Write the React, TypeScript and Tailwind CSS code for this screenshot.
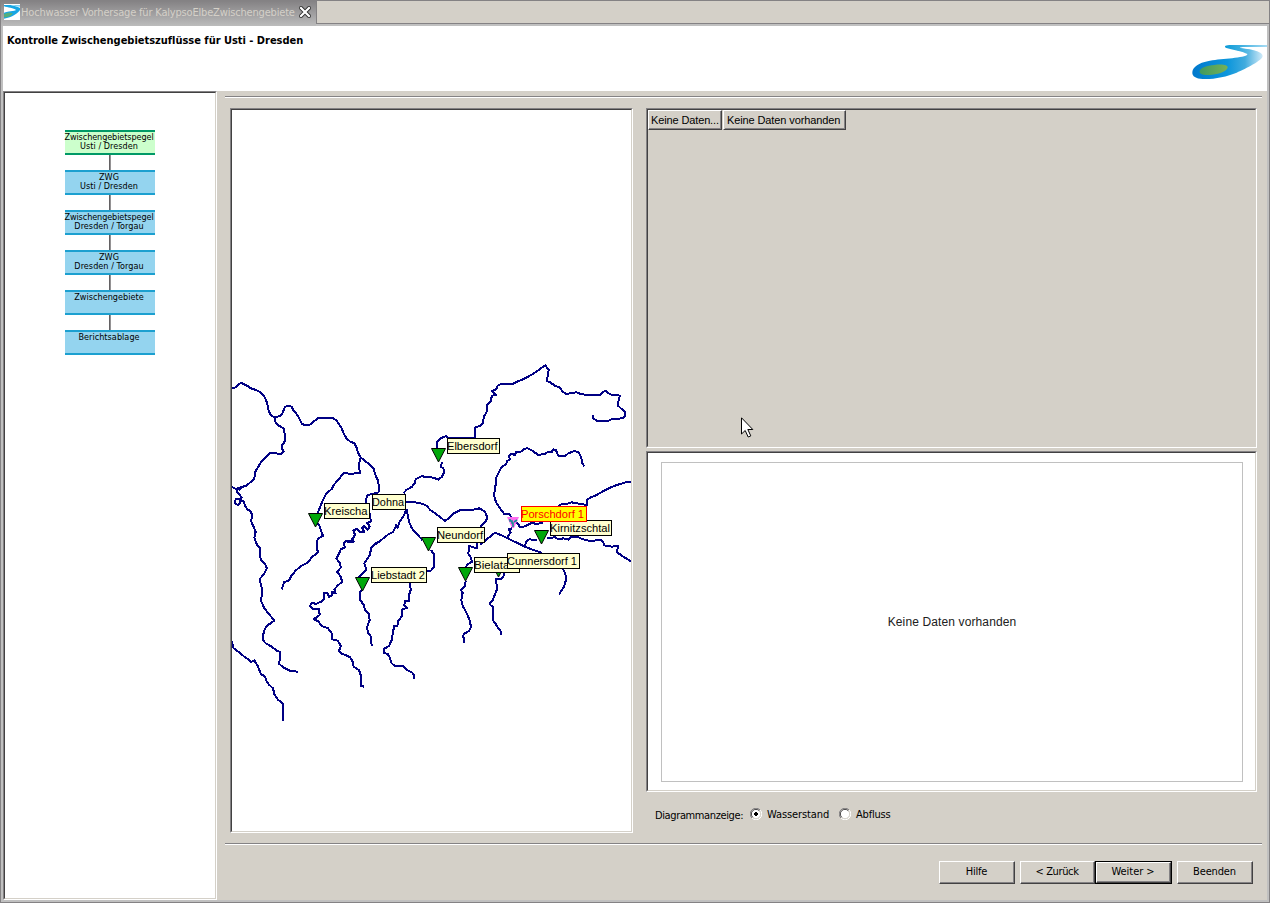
import React from "react";

const UI = "font-['DejaVu_Sans_Condensed','DejaVu_Sans',sans-serif] [font-stretch:condensed]";
const ARIAL = "font-['Liberation_Sans',Arial,sans-serif]";

type Box = { lines: string[]; active?: boolean };

const boxes: Box[] = [
  { lines: ["Zwischengebietspegel", "Usti / Dresden"], active: true },
  { lines: ["ZWG", "Usti / Dresden"] },
  { lines: ["Zwischengebietspegel", "Dresden / Torgau"] },
  { lines: ["ZWG", "Dresden / Torgau"] },
  { lines: ["Zwischengebiete"] },
  { lines: ["Berichtsablage"] },
];

// River courses, grouped by map sheet; each sheet has its own origin and 1/3 px units.
const sheets: { x: number; y: number; rivers: string[] }[] = [
  {
    x: 225,
    y: 355,
    rivers: [
      "20,100 30,98 38,90 48,84 56,87 66,92 78,100 90,104 100,108 110,116 118,124 124,138 128,152 130,164 135,176 142,183 148,187 160,184 170,180 174,170 180,156 188,152 200,155 205,166 212,174 220,184 225,196 232,208 245,210 258,208 268,198 280,189 300,188 325,190 334,196 342,207 350,220 356,236 366,252 376,260 388,265 394,276 400,295 408,308 420,318 434,328 446,342 452,362 460,378 462,412",
      "148,187 152,204 162,212 176,220 180,240 180,258 172,270 170,280 176,290 168,297 150,295 135,294 120,308 108,322 98,338 90,352 88,370 76,382 64,392 50,396 34,402 20,396",
      "50,396 44,404 38,402 36,412 44,420 50,428 44,434 32,432 30,444 38,450 46,444 46,434 56,440 60,452 68,464 76,468 82,480 78,498 86,516 92,530 88,548 90,556",
      "408,308 404,316 402,334 405,354 380,356 355,355 342,372 328,388 320,402 304,416 296,430 288,450 280,470 276,490",
      "278,505 284,514 288,528 294,542 278,552 276,568",
      "462,412 445,416 428,420 422,435 422,460 434,476 436,488 438,500 426,503 434,514 428,524 418,513 411,518 418,530 405,532 395,522 385,526 390,540 382,552 386,560 374,562 360,557",
      "540,440 570,442 590,446 605,452 615,464 640,482 660,498 673,488 685,476 705,466 745,464 763,460 780,470 787,488 780,502 765,516",
      "535,415 545,404 560,396 570,384 572,372 590,364 600,365 615,366 630,370 640,374 651,365 657,352 655,340 647,335 651,322",
      "545,462 548,480 552,500 560,518 570,532 580,542 592,555",
      "545,462 535,485 524,500 518,518 514,510 505,530 490,538 475,550 460,562 450,568",
    ],
  },
  {
    x: 430,
    y: 355,
    rivers: [
      "20,285 20,262 32,250 48,243 58,250 80,248 134,248 134,218 150,212 158,205 162,185 170,170 172,150 182,138 186,122 198,120 185,108 200,102 203,92 212,88 225,88 245,88 262,80 285,70 310,56 330,42 346,31 356,44 354,60 350,78 360,82 375,92 390,98 396,108 408,117 425,114 440,112 455,118 480,120 510,120 520,110 528,108 540,118 555,120 570,122 566,135 564,152 575,162 586,172 586,184 578,190 545,192 535,198 500,197 490,190 488,180",
      "250,495 238,478 222,476 210,460 200,445 194,430 192,418 196,400 198,370 205,355 214,337 228,328 232,318 240,312 236,304 242,296 255,300 258,292 270,292 280,284 292,279 308,288 325,300 345,296 355,290 365,291 370,283 378,286 385,302 405,303 415,295 430,289 445,290 450,300 456,315 457,325 463,334",
      "603,382 590,381 575,386 560,390 540,398 520,408 500,420 480,428 470,436 472,450 460,448 440,445 425,442 408,448 395,447 385,453",
      "340,503 315,508 312,502 300,506 285,514 270,516 262,504 255,497",
    ],
  },
  {
    x: 430,
    y: 500,
    rivers: [
      "246,85 236,88 242,98 234,108 235,116",
      "150,134 165,122 180,110 195,98 210,104 235,116 260,128 285,140 310,150 335,158",
      "285,140 288,125 298,118 320,120",
      "350,114 375,112 385,118 400,115 415,119 425,110 440,110 460,118 485,124 500,120 512,120 520,128 522,136 545,140 565,138 560,156 580,170 603,184",
      "142,124 140,145 118,138 118,150 114,160 122,172 126,185 110,195 108,205",
      "107,243 104,260 92,270 98,278 94,300 98,318 108,335 118,358 123,380 118,392 102,402 98,412 102,414 102,428",
      "225,215 220,230 212,238 198,238 200,255 200,270 192,290 188,302 178,312 190,322 188,340 188,360 196,370 205,385 213,395 213,404",
      "398,205 406,220 408,240 402,260 392,275 388,284",
    ],
  },
  {
    x: 225,
    y: 540,
    rivers: [
      "90,0 98,18 104,22 104,40 108,60 120,72 126,85 118,100 106,115 106,128 112,150 108,182 118,205 132,222 148,242 125,258 116,275 114,300 122,310 140,320 155,332 165,336 163,372 175,382 195,392 210,394 220,396",
      "20,303 26,325 40,335 58,350 70,358 78,366 88,361 98,378 108,402 120,410 124,422 132,434 144,445 148,462 158,478 174,492 174,542",
      "276,10 278,38 262,50 248,68 228,78 212,92 200,106 192,122 178,126 170,148",
      "382,4 364,2 356,10 360,22 347,28 342,42 334,55 344,68 348,82 336,96 346,108 352,125 340,135 328,148 332,160 322,156 320,166 312,170 306,158 296,160 298,175 288,185 272,192 262,188 254,198 264,206 282,206 284,225 266,238 280,244 290,258 308,264 320,280 322,298 338,302 348,318 342,332 350,342 362,345 375,352 382,362 386,380 402,390 408,408 408,438 418,440",
      "470,0 452,10 438,25 435,45 418,70 424,90 410,102 398,114",
      "412,150 404,158 406,180 416,195 420,210 432,222 434,240 426,262 430,280 438,290 440,318",
      "618,30 628,45 628,80 618,92 600,92",
      "555,120 557,150 552,165 553,182 540,182 538,195 546,204 532,208 530,230 520,242 517,258 508,258 504,275 500,300 492,318 478,326 476,338 488,342 494,352 500,370 510,378 535,378 545,390 562,398 568,406 568,416",
    ],
  },
];

const markers: [number, number][] = [
  [438.5, 448],
  [315.5, 513],
  [428.5, 537],
  [362.5, 577],
  [465.5, 567],
  [541.5, 530],
  [498.5, 563],
];

type MapLabel = { text: string; x: number; y: number; w: number; tw: number; hot?: boolean };

const labels: MapLabel[] = [
  { text: "Kreischa", x: 324, y: 503, w: 46, tw: 43.5 },
  { text: "Dohna", x: 372, y: 494, w: 34, tw: 32 },
  { text: "Elbersdorf", x: 447, y: 438, w: 53, tw: 50.5 },
  { text: "Kirnitzschtal", x: 550, y: 520, w: 62, tw: 60 },
  { text: "Porschdorf 1", x: 521, y: 506, w: 66, tw: 63, hot: true },
  { text: "Neundorf", x: 437, y: 527, w: 48, tw: 46 },
  { text: "Bielatal", x: 474, y: 557, w: 46, tw: 38 },
  { text: "Cunnersdorf 1", x: 507, y: 553, w: 73, tw: 70 },
  { text: "Liebstadt 2", x: 371, y: 567, w: 56, tw: 54 },
];

function Sunken({ className = "", children }: { className?: string; children?: React.ReactNode }) {
  return (
    <div className={`border border-t-[#848284] border-l-[#848284] border-r-white border-b-white ${className}`}>
      <div className="h-full w-full border border-t-[#424142] border-l-[#424142] border-r-[#d4d0c8] border-b-[#d4d0c8]">
        {children}
      </div>
    </div>
  );
}

function Rule() {
  return <div className="h-[2px] shrink-0 border-t border-[#848284] bg-white" />;
}

function PushButton({ className = "", primary, children }: { className?: string; primary?: boolean; children: React.ReactNode }) {
  return (
    <button
      className={`block h-[23px] shrink-0 text-[11px] text-black ${UI} ${primary ? "border border-black" : ""} ${className}`}
    >
      <span className="block h-full w-full border border-t-white border-l-white border-r-[#424142] border-b-[#424142]">
        <span className="flex h-full w-full items-center justify-center border-r border-b border-[#848284] pt-px whitespace-pre">
          {children}
        </span>
      </span>
    </button>
  );
}

function HeaderCell({ className = "", children }: { className?: string; children: React.ReactNode }) {
  return (
    <div className={`h-[20px] border border-t-white border-l-white border-r-[#424142] border-b-[#424142] ${className}`}>
      <div
        className={`flex h-full items-center border-r border-b border-[#848284] pt-[2px] pl-[2px] text-[11px] whitespace-nowrap ${ARIAL}`}
      >
        {children}
      </div>
    </div>
  );
}

function Radio({ checked }: { checked?: boolean }) {
  return (
    <svg width="12" height="12" viewBox="0 0 12 12" className="shrink-0">
      <circle cx="6" cy="6" r="5" fill="#fff" />
      <path d="M10.1 1.9A5.5 5.5 0 0 1 1.9 10.1" fill="none" stroke="#fff" />
      <path d="M9.3 2.7A4.6 4.6 0 0 1 2.7 9.3" fill="none" stroke="#d4d0c8" />
      <path d="M1.9 10.1A5.5 5.5 0 0 1 10.1 1.9" fill="none" stroke="#848284" />
      <path d="M2.7 9.3A4.6 4.6 0 0 1 9.3 2.7" fill="none" stroke="#424142" />
      {checked && <path d="M5 4h2v1h1v2h-1v1h-2v-1h-1v-2h1z" fill="#000" shapeRendering="crispEdges" />}
    </svg>
  );
}

function RiverLogo() {
  return (
    <svg width="75" height="36" viewBox="128 132 225 108">
      <defs>
        <linearGradient id="water" x1="0" x2="1">
          <stop offset="0" stopColor="#0078cc" />
          <stop offset=".5" stopColor="#0c96dc" />
          <stop offset=".75" stopColor="#42acde" />
          <stop offset="1" stopColor="#d0eaf8" />
        </linearGradient>
        <linearGradient id="tip" x1="0" x2="1">
          <stop offset="0" stopColor="#0a9ad8" />
          <stop offset=".4" stopColor="#40b0e0" />
          <stop offset="1" stopColor="#a8dcf4" />
        </linearGradient>
        <linearGradient id="isle" x1="0" x2="1">
          <stop offset="0" stopColor="#3f9a60" />
          <stop offset="1" stopColor="#76b056" />
        </linearGradient>
      </defs>
      <path
        d="M270 144C300 147 340 153 340 168C341 180 290 206 262 218C232 230 190 239 160 237C140 236 128 230 129 216C131 200 150 189 175 184C210 175 275 176 293 165C300 157 275 153 258 149Z"
        fill="url(#water)"
      />
      <path d="M353 135H240C225 136 224 141 231 144C245 148 265 152 280 156L292 161L310 150C295 147 278 147 271 143L280 141H353Z" fill="url(#tip)" />
      <path d="M151 213C154 203 172 197 195 195C220 192 236 195 235 203C233 212 214 221 188 224C166 227 149 224 151 213Z" fill="url(#isle)" />
    </svg>
  );
}

function TabIcon() {
  return (
    <svg width="16" height="16" viewBox="0 0 48 48" className="shrink-0 bg-white">
      <path d="M0 3L20 3L40 8L48 12V18C42 28 25 40 0 44V26C12 21 30 22 36 18C30 13 10 10 0 7Z" fill="#18a6e4" />
      <path d="M0 8C12 12 30 14 32 18C26 21 10 20 0 25Z" fill="#fff" />
      <path d="M0 31C8 26 22 25 26 29C22 36 10 40 0 40Z" fill="#55ae7c" />
      <path d="M20 3H48V8L38 7Z" fill="#7cd0f2" />
    </svg>
  );
}

function RiverMap() {
  return (
    <svg width="399" height="721" viewBox="232 110 399 721" className="block">
      {sheets.map((s, i) => (
        <g
          key={i}
          transform={`translate(${s.x} ${s.y}) scale(0.33333)`}
          fill="none"
          stroke="#000084"
          strokeWidth="6"
          strokeLinejoin="round"
          shapeRendering="crispEdges"
        >
          {s.rivers.map((r, j) => (
            <polyline key={j} points={r} />
          ))}
        </g>
      ))}
      {markers.map(([x, y], i) => (
        <path key={i} d={`M${x - 7} ${y + 0.5}h14l-7 13.5z`} fill="#00a80a" stroke="#000" strokeWidth="1" />
      ))}
      <path d="M507 517h12l-5 11h-2z" fill="#ff6cf0" />
      <path d="M510 519v2h2v2h1v4M517 520l-3 2" fill="none" stroke="#109090" strokeWidth="1.6" />
      {labels.map((l) => (
        <g key={l.text}>
          <rect
            x={l.x + 0.5}
            y={l.y + 0.5}
            width={l.w - 1}
            height="15"
            fill={l.hot ? "#ffff00" : "#ffffce"}
            stroke={l.hot ? "#ff0000" : "#000"}
          />
          <text
            x={l.x}
            y={l.y + 12}
            textLength={l.tw}
            lengthAdjust="spacingAndGlyphs"
            className={`text-[11px] ${ARIAL}`}
            fill={l.hot ? "#ff0000" : "#000"}
          >
            {l.text}
          </text>
        </g>
      ))}
    </svg>
  );
}

export default function App() {
  return (
    <div className={`relative flex h-[903px] w-[1270px] flex-col overflow-hidden border border-[#848284] bg-[#c0c0c0] text-black ${UI}`}>
      <div className="flex h-[25px] shrink-0">
        <div className="flex w-[315px] items-start bg-linear-to-b from-[#848284] to-[#bcbcbc] pt-[3px] pl-[3px]">
          <TabIcon />
          <span className="w-[279px] pt-[2px] pl-px text-[11px] leading-[14px] tracking-[-0.18px] whitespace-nowrap text-[#d4d0c8]">
            Hochwasser Vorhersage für KalypsoElbeZwischengebiete
          </span>
          <svg width="12" height="12" viewBox="0 0 12 12" className="mt-[2px] shrink-0">
            <path d="M2 2l8 8M10 2l-8 8" stroke="#303030" strokeWidth="4" strokeLinecap="square" />
            <path d="M2 2l8 8M10 2l-8 8" stroke="#fff" strokeWidth="2.200" strokeLinecap="square" />
          </svg>
        </div>
        <div className="h-[23px] flex-1 border-b border-l border-[#848284] bg-[#d4d0c8]" />
      </div>

      <div className="mr-[2px] mb-[2px] ml-[2px] flex min-h-0 flex-1 flex-col bg-[#d4d0c8]">
        <header className="flex h-[65px] shrink-0 justify-between bg-white pl-[4px]">
          <h1 className="pt-[8px] text-[11px] leading-[14px] font-bold tracking-[-0.02px] whitespace-nowrap">
            Kontrolle Zwischengebietszuflüsse für Usti - Dresden
          </h1>
          <div className="mt-[18px]">
            <RiverLogo />
          </div>
        </header>

        <div className="flex min-h-0 flex-1">
          <Sunken className="w-[214px] shrink-0 bg-white">
            <div className="flex flex-col items-center pt-[37px]">
              {boxes.map((b, i) => (
                <React.Fragment key={i}>
                  {i > 0 && <div className="h-[15px] w-[2px] border-l border-[#636163] bg-[#949294]" />}
                  <div
                    className={`flex h-[25px] w-[90px] flex-col items-center border-y-2 pt-px pr-[2px] text-[9px] leading-[9px] whitespace-nowrap ${
                      b.active ? "border-[#009966] bg-[#ccffcc]" : "border-[#1ca0d0] bg-[#94d4ef]"
                    }`}
                  >
                    {b.lines.map((t) => (
                      <span key={t} className={t.length > 18 ? "tracking-[-0.08px]" : "tracking-[0.05px]"}>
                        {t}
                      </span>
                    ))}
                  </div>
                </React.Fragment>
              ))}
            </div>
          </Sunken>

          <div className="flex min-w-0 flex-1 flex-col pt-[5px] pr-[5px] pl-[8px]">
            <Rule />
            <div className="flex h-[735px] shrink-0 pt-[10px] pl-[5px]">
              <Sunken className="h-[725px] w-[403px] shrink-0 bg-white">
                <RiverMap />
              </Sunken>
              <div className="ml-[13px] flex w-[611px] flex-col">
                <Sunken className="h-[340px] shrink-0">
                  <div className="flex gap-px">
                    <HeaderCell className="w-[74px] tracking-[-0.13px]">Keine Daten...</HeaderCell>
                    <HeaderCell className="w-[123px] pl-px tracking-[-0.11px]">Keine Daten vorhanden</HeaderCell>
                  </div>
                </Sunken>
                <Sunken className="mt-[3px] h-[341px] shrink-0 bg-white">
                  <div className={`mt-[9px] ml-[13px] flex h-[320px] w-[582px] items-center justify-center border border-[#c0c0c0] text-[12px] ${ARIAL}`}>
                    <span className="tracking-[0.12px] text-[#202020]">Keine Daten vorhanden</span>
                  </div>
                </Sunken>
                <div className="flex pt-[16px] pl-[9px] text-[11px] leading-[14px] whitespace-nowrap">
                  <span className="w-[95px] pt-px tracking-[-0.38px]">Diagrammanzeige:</span>
                  <label className="flex w-[89px] gap-[5px]">
                    <Radio checked />
                    <span className="tracking-[-0.1px]">Wasserstand</span>
                  </label>
                  <label className="flex gap-[5px]">
                    <Radio />
                    <span className="tracking-[-0.2px]">Abfluss</span>
                  </label>
                </div>
              </div>
            </div>
            <div className="h-[10px] shrink-0" />
            <Rule />
            <div className="flex justify-end pt-[16px] pr-[9px]">
              <PushButton className="mr-[5px] w-[76px] tracking-[-0.2px]">Hilfe</PushButton>
              <PushButton className="w-[75px] tracking-[-0.35px]">{"< Zurück"}</PushButton>
              <PushButton primary className="mr-[5px] w-[77px] tracking-[-0.05px]">{"Weiter >"}</PushButton>
              <PushButton className="w-[76px] tracking-[-0.15px]">Beenden</PushButton>
            </div>
          </div>
        </div>
      </div>

      <svg width="13" height="22" viewBox="0 0 13 22" className="absolute top-[416px] left-[740px]">
        <path d="M.5 .8V17l3.700-3.500 3 6.500 2.600-1.100-3-6.400h5z" fill="#fff" stroke="#000" />
      </svg>
    </div>
  );
}
